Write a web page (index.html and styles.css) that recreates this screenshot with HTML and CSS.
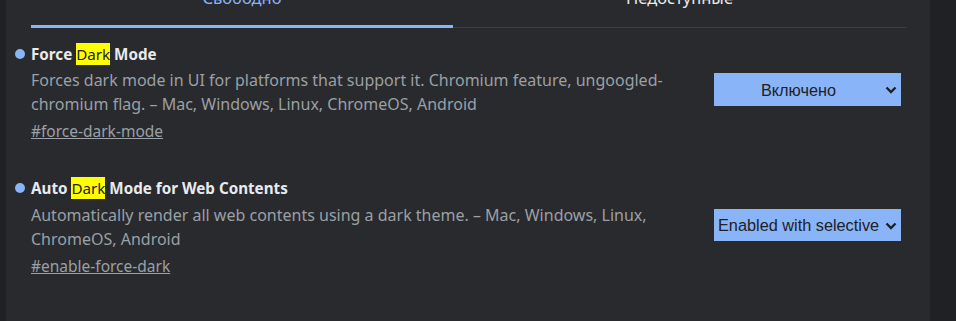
FILE: index.html
```html
<!DOCTYPE html>
<html lang="ru">
<head>
    <meta charset="UTF-8">
    <title>Experiments</title>
    <link rel="stylesheet" href="styles.css">
</head>
<body>
    <div class="panel">
        <div class="tabs">
            <div class="tab selected">Свободно</div>
            <div class="tab">Недоступные</div>
        </div>

        <div class="flag">
            <div class="flag-main">
                <h2 class="flag-name"><span class="bullet"></span>Force <mark>Dark</mark> Mode</h2>
                <p class="flag-desc">Forces dark mode in UI for platforms that support it. Chromium feature, ungoogled-chromium flag. – Mac, Windows, Linux, ChromeOS, Android</p>
                <a class="permalink" href="#force-dark-mode">#force-dark-mode</a>
            </div>
            <div class="flag-control">
                <div class="select-wrap">
                    <select class="flag-select">
                        <option>По умолчанию</option>
                        <option selected>Включено</option>
                        <option>Отключено</option>
                    </select>
                    <svg class="chevron" width="12" height="8" viewBox="0 0 12 8"><path d="M1.5 1.5 L6 6 L10.5 1.5" fill="none" stroke="#202124" stroke-width="2.4"/></svg>
                </div>
            </div>
        </div>

        <div class="flag">
            <div class="flag-main">
                <h2 class="flag-name"><span class="bullet"></span>Auto <mark>Dark</mark> Mode for Web Contents</h2>
                <p class="flag-desc">Automatically render all web contents using a dark theme. – Mac, Windows, Linux, ChromeOS, Android</p>
                <a class="permalink" href="#enable-force-dark">#enable-force-dark</a>
            </div>
            <div class="flag-control">
                <div class="select-wrap">
                    <select class="flag-select left">
                        <option>По умолчанию</option>
                        <option selected>Enabled with selective inversion of non-image elements</option>
                        <option>Отключено</option>
                    </select>
                    <svg class="chevron" width="12" height="8" viewBox="0 0 12 8"><path d="M1.5 1.5 L6 6 L10.5 1.5" fill="none" stroke="#202124" stroke-width="2.4"/></svg>
                </div>
            </div>
        </div>
    </div>
</body>
</html>
```

FILE: styles.css
```css
body {
    margin: 0;
    background: #202124;
    font-family: 'Noto Sans', 'Open Sans', sans-serif;
    color: #e8eaed;
    height: 321px;
    overflow: hidden;
}
.panel {
    margin-left: 6px;
    width: 924px;
    height: 100%;
    background: #292a2d;
}
.tabs {
    display: flex;
    margin: 0 24px 0 25px;
    border-bottom: 1px solid #3c4043;
    height: 27px;
}
.tab {
    flex: 1;
    text-align: center;
    font-size: 16.5px;
    line-height: 20px;
    margin-top: -12px;
    color: #e8eaed;
}
.tab.selected {
    flex: 0 0 422px;
    color: #8ab4f8;
    border-bottom: 3px solid #8ab4f8;
    border-radius: 2px 2px 0 0;
    margin-bottom: -1px;
}
.flag {
    display: flex;
    justify-content: space-between;
    padding: 16px 29px 0 25px;
    height: 118px;
}
.flag-main {
    width: 650px;
}
.flag-name {
    position: relative;
    margin: 0;
    font-size: 15.2px;
    font-weight: 700;
    line-height: 20px;
    color: #e8eaed;
}
.bullet {
    position: absolute;
    left: -16px;
    top: 5px;
    width: 10px;
    height: 10px;
    border-radius: 50%;
    background: #8ab4f8;
}
mark {
    background: #ffff00;
    color: #202124;
    font-weight: 400;
    padding: 1px 0;
}
.flag-desc {
    margin: 4px 0 0;
    font-size: 16px;
    line-height: 24px;
    color: #9aa0a6;
}
.flag + .flag .flag-desc {
    margin-top: 5px;
}
.permalink {
    display: inline-block;
    margin-top: 4px;
    font-size: 15.5px;
    line-height: 22px;
    color: #9aa0a6;
}
.flag-control {
    padding-top: 29px;
}
.flag + .flag .flag-control {
    padding-top: 31px;
}
.select-wrap {
    position: relative;
    width: 187px;
}
.flag-select {
    appearance: none;
    display: block;
    width: 187px;
    height: 33px;
    border: none;
    border-radius: 0;
    background: #8ab4f8;
    color: #202124;
    font-family: 'Liberation Sans', Arial, sans-serif;
    font-size: 16.3px;
    padding: 0 22px 0 4px;
    text-align: center;
    text-align-last: center;
}
.flag-select.left {
    height: 32px;
    text-align: left;
    text-align-last: left;
    padding-right: 21px;
}
.chevron {
    position: absolute;
    right: 4px;
    top: 13px;
    pointer-events: none;
}
```
